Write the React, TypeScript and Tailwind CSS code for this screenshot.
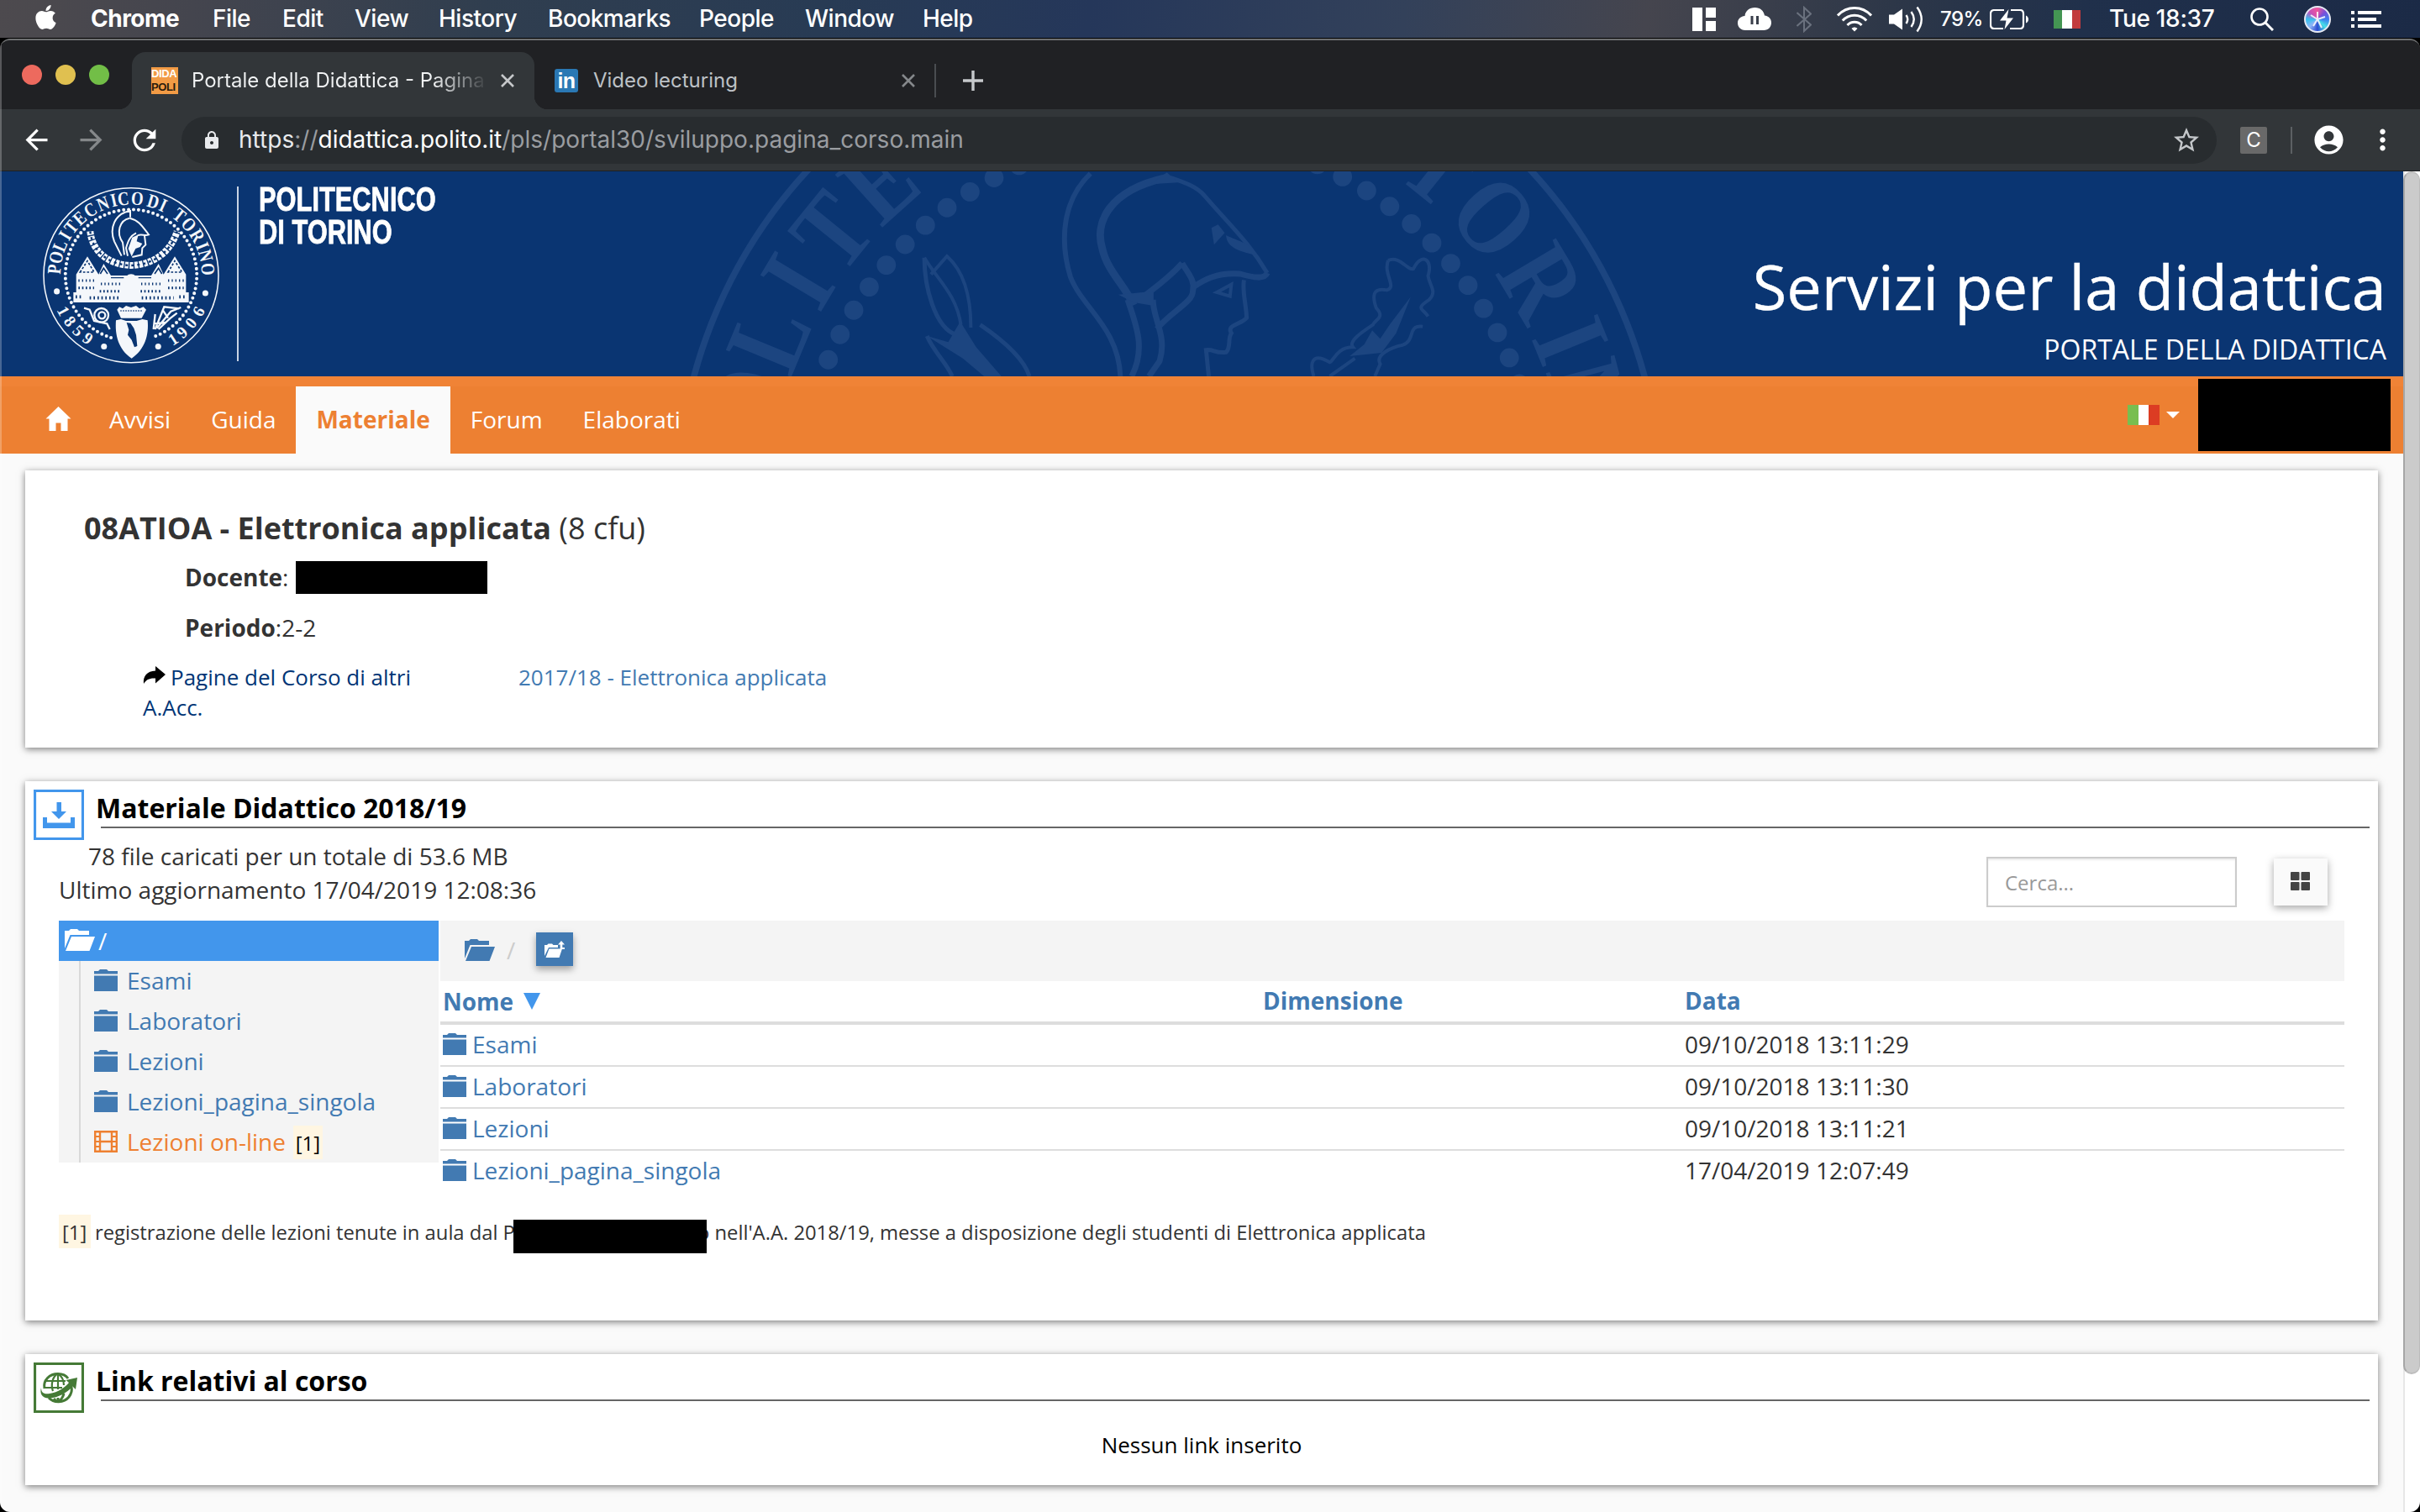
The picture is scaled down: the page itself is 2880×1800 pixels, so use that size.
import React from 'react';
import type { ReactNode } from 'react';
import { FaApple } from 'react-icons/fa';
import {
  MdAccountCircle,
  MdArrowBack,
  MdArrowForward,
  MdLock,
  MdMoreVert,
  MdRefresh,
  MdStarBorder,
} from 'react-icons/md';

const UI = "font-['Inter','Liberation_Sans',sans-serif]";
const WEB = "font-['Open_Sans','Noto_Sans',sans-serif]";

/* ---------- macOS menu bar ---------- */

const MENUS = [
  { label: 'Chrome', cls: 'w-[145px] font-bold' },
  { label: 'File', cls: 'w-[83px] font-medium' },
  { label: 'Edit', cls: 'w-[86px] font-medium' },
  { label: 'View', cls: 'w-[100px] font-medium' },
  { label: 'History', cls: 'w-[130px] font-medium' },
  { label: 'Bookmarks', cls: 'w-[180px] font-medium' },
  { label: 'People', cls: 'w-[126px] font-medium' },
  { label: 'Window', cls: 'w-[140px] font-medium' },
  { label: 'Help', cls: 'w-[90px] font-medium' },
];

function MenuBar() {
  return (
    <div
      className={`${UI} flex h-[45px] shrink-0 items-center bg-[linear-gradient(100deg,#4d4a4e_0%,#44454e_8%,#303e4f_20%,#283b54_34%,#25375a_45%,#33415a_58%,#45454e_68%,#2d3748_78%,#20304b_86%,#1b2a46_100%)] text-[28px] leading-[43px] text-white`}
    >
      <FaApple className="-mt-[4px] ml-[38px] size-[33px]" />
      <div className="ml-[37px] flex tracking-[-0.5px]">
        {MENUS.map((m) => (
          <span key={m.label} className={m.cls}>
            {m.label}
          </span>
        ))}
      </div>
      <div className="ml-auto flex items-center">
        <svg className="size-7" viewBox="0 0 28 28" fill="#fff">
          <path d="M0 0h12v28H0zM16 0h12v12H16zM16 16h12v12H16z" />
        </svg>
        <svg className="ml-[26px] h-[27px] w-10" viewBox="0 0 40 27">
          <path
            d="M9 27C3 27 0 22.500 0 18.500C0 14 3 10.500 8.500 10C9 4 14 0 20.500 0C27 0 31 4 32 9.500C37 10 40 13.500 40 18C40 23 36.500 27 31 27Z"
            fill="#fff"
          />
          <path d="M15.500 10h3v10h-3zM22 10h3v10h-3z" fill="#3a3f4b" />
        </svg>
        <svg className="ml-[30px] h-8 w-[18px]" viewBox="0 0 18 32" fill="none" stroke="#6a717e" strokeWidth="2">
          <path d="M0.500 8L17 22.500L9 30V2L17 9.500L0.500 24" />
        </svg>
        <svg className="ml-[30px] h-[30px] w-[42px]" viewBox="0 0 42 30" fill="none" stroke="#fff" strokeWidth="3">
          <path d="M1 10.500C12 -1.500 30 -1.500 41 10.500M6.800 16.500C14.500 8 27.500 8 35.200 16.500M12.500 22C17 17 25 17 29.500 22" />
          <path d="M17.500 26C19.500 24 22.500 24 24.500 26L21 29.500Z" fill="#fff" stroke="none" />
        </svg>
        <svg className="ml-[20px] h-8 w-[41px]" viewBox="0 0 41 32" fill="none" stroke="#fff" strokeWidth="2.400">
          <path d="M0 10.500H6L16 3.500V28.500L6 21.500H0Z" fill="#fff" stroke="none" />
          <path d="M20.500 11Q24 16 20.500 21M26.500 7Q33 16 26.500 25M33.500 1.500Q44 16 33.500 30.500" />
        </svg>
        <span className="ml-[20px] w-[59px] text-[24px] font-medium tracking-[-0.6px]">79%</span>
        <svg className="h-6 w-[46px]" viewBox="0 0 46 24" fill="none" stroke="#fff" strokeWidth="2.200">
          <path d="M17 1H5.500Q1 1 1 5.500V18.500Q1 23 5.500 23H16M25 1H36Q40 1 40 5.500V18.500Q40 23 36 23H24" />
          <path d="M43 7.500Q46 9 46 12T43 16.500Z" fill="#fff" stroke="none" />
          <path d="M22.500 0L12 13.500H19.500L17.500 24L28 10.500H20.500Z" fill="#fff" stroke="none" />
        </svg>
        <span className="ml-[30px] flex h-[22px] w-8">
          <span className="flex-1 bg-[#449553]" />
          <span className="w-[12px] bg-white" />
          <span className="flex-1 bg-[#c23b3d]" />
        </span>
        <span className="ml-[34px] w-[168px] font-medium tracking-[-0.3px]">Tue 18:37</span>
        <svg className="h-7 w-[28px]" viewBox="0 0 28 28" fill="none" stroke="#fff" strokeWidth="2.600">
          <circle cx="11" cy="11" r="9.500" />
          <path d="M18 18L27 27" strokeWidth="3" />
        </svg>
        <span className="ml-[36px] flex size-8 items-center justify-center rounded-full border-2 border-[#e5e9f3] bg-[conic-gradient(from_0deg,#f0569c,#7b4fd8,#3b7df0,#47e0e8,#2c4bd0,#8fb6f8,#35c0ee,#c94fb8,#f0569c)]">
          <svg className="size-6" viewBox="0 0 24 24" stroke="#fff" strokeWidth="2">
            <path d="M12 12L4 7M12 12L21 9M12 12L17 22M12 12L7 20M12 12V3" opacity=".85" />
          </svg>
        </span>
        <svg className="mr-[46px] ml-[24px] h-5 w-9" viewBox="0 0 36 20" fill="#fff">
          <path d="M0 0h4v4H0zM8 0h28v4H8zM0 8h4v4H0zM8 8h22v4H8zM0 16h4v4H0zM8 16h28v4H8z" />
        </svg>
      </div>
    </div>
  );
}

/* ---------- Chrome window ---------- */

function TabClose({ color }: { color: string }) {
  return (
    <svg className="size-4" viewBox="0 0 16 16" stroke={color} strokeWidth="2.600">
      <path d="M1 1L15 15M15 1L1 15" />
    </svg>
  );
}

function TabStrip() {
  return (
    <div className={`${UI} flex h-[82px] shrink-0 items-end bg-[#202124] text-[24px] leading-[68px]`}>
      <div className="mb-[29px] ml-[26px] flex gap-4">
        <span className="size-6 rounded-full bg-[#ed6a5e]" />
        <span className="size-6 rounded-full bg-[#e0c050]" />
        <span className="size-6 rounded-full bg-[#72be47]" />
      </div>
      <div className="relative ml-[27px] flex h-[68px] w-[479px] items-center rounded-t-[16px] bg-[#323639]">
        <span className="absolute bottom-0 -left-4 size-4 bg-[radial-gradient(circle_at_0_0,transparent_16px,#323639_16.5px)]" />
        <span className="absolute -right-4 bottom-0 size-4 bg-[radial-gradient(circle_at_100%_0,transparent_16px,#323639_16.5px)]" />
        <span className="ml-[23px] flex size-8 flex-col justify-center overflow-hidden bg-[#f29b45] font-['Liberation_Sans',sans-serif] text-[13px] leading-[16px] font-bold tracking-[-0.4px]">
          <span className="text-white">DIDA</span>
          <span className="text-[#2a1c0c]">POLI</span>
        </span>
        <span className="ml-[16px] w-[350px] overflow-hidden bg-[linear-gradient(90deg,#f1f3f4_82%,#323639_101%)] bg-clip-text whitespace-nowrap text-transparent">
          Portale della Didattica - Pagina
        </span>
        <span className="ml-[18px]">
          <TabClose color="#c6c8ca" />
        </span>
      </div>
      <div className="flex h-[68px] w-[478px] items-center">
        <span className="ml-[24px] flex size-7 items-center justify-center rounded-[3px] bg-[#2a78b4] font-['Liberation_Sans',sans-serif] text-[25px] leading-[28px] font-bold tracking-[-0.5px] text-white">
          in
        </span>
        <span className="ml-[18px] text-[#bdc1c6]">Video lecturing</span>
        <span className="mr-[23px] ml-auto">
          <TabClose color="#85888b" />
        </span>
        <span className="h-10 w-[2px] bg-[#4a4d51]" />
      </div>
      <svg className="mb-[22px] ml-[32px] size-6" viewBox="0 0 24 24" stroke="#c6c9cc" strokeWidth="3.400">
        <path d="M12 0V24M0 12H24" />
      </svg>
    </div>
  );
}

function Toolbar() {
  return (
    <div className={`${UI} flex h-[74px] shrink-0 items-center border-b border-[#1f2022] bg-[#323639] text-white`}>
      <MdArrowBack className="ml-[24px] size-[39px]" />
      <MdArrowForward className="ml-[26px] size-[39px] text-[#85888a]" />
      <MdRefresh className="ml-[24px] size-[40px]" />
      <div className="ml-[24px] flex h-14 w-[2422px] items-center rounded-full bg-[#282c2f]">
        <MdLock className="ml-[24px] size-[24px] text-[#e8eaed]" />
        <span className="mb-[2px] ml-[20px] text-[28px] leading-[54px] tracking-[0.015px] whitespace-nowrap text-[#9a9da1]">
          <span className="text-[#e8eaed]">https</span>://
          <span className="text-white">didattica.polito.it</span>
          /pls/portal30/sviluppo.pagina_corso.main
        </span>
        <MdStarBorder className="mr-[18px] ml-auto size-[36px] text-[#c4c7ca]" />
      </div>
      <span className="ml-[28px] flex size-8 items-center justify-center rounded-[2px] bg-[#696969] text-[24px] leading-8">
        C
      </span>
      <span className="ml-[28px] h-8 w-[2px] bg-[#5c6063]" />
      <MdAccountCircle className="ml-[23px] size-[41px]" />
      <MdMoreVert className="ml-[24px] size-[39px]" />
    </div>
  );
}

/* ---------- Page header ---------- */

type Glyph = [char: string, angle: number];

/* Upper lettering: degrees clockwise from the top of the seal. */
const SEAL_NAME: Glyph[] = [
  ['P', -85.4], ['O', -76.6], ['L', -67.4], ['I', -59], ['T', -51], ['E', -42], ['C', -32],
  ['N', -21.5], ['I', -13], ['C', -5.8], ['O', 4.6], ['D', 16.8], ['I', 24.6], ['T', 38.8],
  ['O', 48.6], ['R', 59.2], ['I', 67.8], ['N', 75.2], ['O', 85.4],
];

const MARK_NAME = SEAL_NAME.filter(([, a]) => Math.abs(a) > 36 && Math.abs(a) < 78);

/* Dates: degrees clockwise from the bottom of the seal. */
const SEAL_YEARS: Glyph[] = [
  ['1', 62.2], ['8', 53], ['5', 43.7], ['9', 34.4], ['1', -33.3], ['9', -41.8], ['0', -51.4], ['6', -61.8],
];

/* Border, beads and lettering, centred on the origin with an outer radius of 100. */
function SealRing({ color, ring, name, years }: { color: string; ring: number; name: Glyph[]; years: Glyph[] }) {
  return (
    <g fill={color}>
      <circle r="100" fill="none" stroke={color} strokeWidth={ring} />
      <path
        d="M-23 71.500A75.200 75.200 0 1 1 23 71.500"
        fill="none"
        stroke={color}
        strokeWidth="3.900"
        strokeLinecap="round"
        strokeDasharray="0 5.670"
      />
      <g fontFamily="'Liberation Serif', serif" fontWeight="bold" textAnchor="middle">
        {name.map(([c, a]) => (
          <text key={a} fontSize="22" transform={`rotate(${a}) translate(0 -80.800) scale(0.820 1)`}>
            {c}
          </text>
        ))}
        {years.map(([c, a]) => (
          <text key={a} fontSize="19" transform={`rotate(${a}) translate(0 94)`}>
            {c}
          </text>
        ))}
      </g>
      <circle cx="-85" cy="18.500" r="3.400" />
      <circle cx="85" cy="20.500" r="3.400" />
      <circle cx="-31" cy="81.500" r="3.400" />
      <circle cx="31" cy="81.500" r="3.400" />
    </g>
  );
}

function Seal() {
  return (
    <svg className="h-[230px] w-[240px]" viewBox="0 0 720 690">
      <g transform="translate(348 347) scale(3.120)">
        <SealRing color="#f4f7fb" ring={1.5} name={SEAL_NAME} years={SEAL_YEARS} />
      </g>
      <g fill="none" stroke="#f4f7fb" strokeWidth="6">
        <path d="M345 114V140M345 118C288 126 270 180 288 226C300 250 306 262 314 278" />
        <path d="M343 143C306 150 294 196 318 230L324 274" />
        <path d="M343 143C375 150 388 172 411 202C398 208 384 198 372 205" />
        <path d="M366 196C346 206 338 222 330 250L336 278" />
        <path d="M396 206L400 238L388 250L386 274L352 282" />
      </g>
      <path d="M352 212L374 202L368 226L388 234L380 246L364 252L350 280L338 252Z" fill="#f4f7fb" />
      <path
        d="M202 190C210 268 274 310 348 312C424 310 490 266 512 190"
        fill="none"
        stroke="#f4f7fb"
        strokeWidth="24"
        strokeDasharray="13 4"
      />
      <path
        d="M202 190C210 268 274 310 348 312C424 310 490 266 512 190"
        fill="none"
        stroke="#0a3572"
        strokeWidth="7"
        strokeDasharray="9 12"
      />
      <g fill="#f4f7fb">
        <path d="M142 408H152V344L192 280L232 344L250 306L276 348H420L446 306L464 344L504 280L544 344V408H554V444H142Z" />
        <circle cx="348" cy="366" r="23" />
      </g>
      <g fill="none" stroke="#0a3572">
        <path d="M276 356H322M374 356H420" strokeWidth="4" />
        <path d="M166 336L192 296L216 336ZM480 336L504 296L530 336Z" strokeWidth="5" strokeDasharray="8 6" />
        <path d="M238 342L250 322L264 342M432 342L446 322L458 342" strokeWidth="5" />
        <path d="M160 366H216M240 378H312M384 378H456M480 366H536" strokeWidth="9" strokeDasharray="4 9" />
        <path d="M160 392H216M236 404H314M382 404H460M480 392H536" strokeWidth="9" strokeDasharray="5 8" />
        <path d="M150 424H176M200 428H312M386 428H500M520 424H546" strokeWidth="11" strokeDasharray="5 9" />
      </g>
      <g fill="none" stroke="#f4f7fb" strokeWidth="7">
        <circle cx="242" cy="490" r="25" />
        <circle cx="244" cy="490" r="12" />
        <path d="M180 464L200 470L216 510L262 520L272 540" />
        <path d="M428 540L434 486M434 540L466 460L520 466M440 536L490 476L526 462M446 540L486 502L512 482M460 470L480 500M428 520L470 516" />
      </g>
      <path
        d="M298 470L306 460L318 466L330 456L348 462L366 456L378 466L392 460L402 470L386 500H312Z"
        fill="#f4f7fb"
      />
      <path d="M310 474H388" stroke="#0a3572" strokeWidth="5" strokeDasharray="4 5" />
      <path d="M294 508L312 504L330 510H368L388 504L407 508C412 560 398 612 350 644C302 612 290 560 294 508Z" fill="#f4f7fb" />
      <path d="M332 516L346 518L358 536L366 560L370 600L360 604L350 578L336 560L340 542Z" fill="#0a3572" />
    </svg>
  );
}

/* Helmeted head and laurel branches: outline path and stroke width in pixels. */
const MARK_LINES: [d: string, width: number][] = [
  ['M680 20C640 110 632 250 650 390C668 500 722 570 725 744', 6],
  ['M795 34C705 80 686 200 698 290C706 370 732 420 745 490', 9],
  ['M800 34C820 50 840 66 852 100C892 210 920 270 946 375', 5],
  ['M946 375C942 398 926 392 905 378C870 372 850 400 835 425', 7],
  ['M818 340C795 400 775 430 752 474', 7],
  ['M818 340C826 375 838 400 834 440C834 480 800 515 780 575', 7],
  ['M736 470C748 560 764 640 742 744', 7],
  ['M774 470C774 540 796 600 784 690L768 744', 7],
  ['M911 400C908 440 914 480 915 535C906 560 884 560 892 590C886 610 892 640 884 658C866 662 866 646 854 650L858 744', 5],
  ['M870 444L892 416L890 458Z', 4],
  ['M430 320C430 420 445 570 478 596', 5],
  ['M430 320C450 400 478 450 485 560', 4],
  ['M440 380L464 315C490 370 500 460 500 570', 4],
  ['M434 600C445 660 462 690 472 744', 5],
  ['M514 560C545 610 580 680 588 744', 5],
  ['M1128 330C1145 310 1158 370 1166 360C1178 300 1196 325 1188 385C1190 420 1202 440 1190 470C1168 505 1180 500 1188 530', 4],
  ['M1128 330C1120 380 1142 425 1126 436C1104 425 1104 460 1110 500C1124 535 1108 540 1105 560C1086 590 1068 620 1075 640C1050 640 1046 690 1040 694C1012 655 1010 700 1016 744', 4],
  ['M1180 566C1156 560 1170 615 1150 632C1132 640 1108 668 1116 700L1108 744M1040 744L1078 680', 4],
];

/* Enlarged seal printed faintly behind the header. */
function Watermark() {
  return (
    <svg
      className="absolute top-0 left-[760px] h-[244px] w-[1240px]"
      viewBox="0 12 1568 732"
      preserveAspectRatio="none"
    >
      <g transform="translate(798.500 1200) scale(7.405 17.568)">
        <SealRing color="#1c4580" ring={1.3} name={MARK_NAME} years={[]} />
      </g>
      <g fill="none" stroke="#1c4580">
        {MARK_LINES.map(([d, w]) => (
          <path key={d} d={d} strokeWidth={w} vectorEffect="non-scaling-stroke" />
        ))}
      </g>
      <g fill="#1c4580">
        <path d="M862 214L872 202L882 232L866 274Z" />
        <path d="M884 240C900 260 925 270 930 312C910 300 885 290 884 240Z" />
        <path d="M795 16L812 52L770 58Z" />
        <path d="M434 600L466 622L484 548L508 640L546 744H520L488 680Z" />
        <path d="M1162 460L1140 590L1118 660L1070 672L1092 630L1104 580L1116 610L1130 560Z" />
        <path d="M722 452L775 440V492L745 480Z" />
      </g>
    </svg>
  );
}

function PageHeader() {
  return (
    <header className="relative flex h-[244px] shrink-0 overflow-hidden bg-[#0a3572]">
      <Watermark />
      <div className="mt-[8px] ml-[40px]">
        <Seal />
      </div>
      <span className="mt-[18px] ml-[2px] h-[208px] w-[2px] bg-[#c8d3e3]" />
      <div className="mt-[14px] ml-[24px] h-[80px] w-[230px] origin-left scale-x-[0.752] font-['Liberation_Sans',sans-serif] text-[41px] leading-[38.500px] font-bold whitespace-nowrap text-white [-webkit-text-stroke:0.8px_white]">
        POLITECNICO
        <br />
        DI TORINO
      </div>
      <div className="relative mt-[87px] mr-[20px] ml-auto flex flex-col items-end text-white">
        <h1 className="text-[74px] leading-[100px] [-webkit-text-stroke:0.4px_white]">Servizi per la didattica</h1>
        <p className="mt-[3px] text-[32px] leading-[44px]">PORTALE DELLA DIDATTICA</p>
      </div>
    </header>
  );
}

const NAV_LINK = 'h-[80px] px-6';

function NavBar() {
  return (
    <nav className="flex h-[92px] shrink-0 items-center bg-[linear-gradient(#f08336_12px,#ed8032_12px)] text-[28px] leading-[78px] text-white">
      <div className="flex h-[80px] items-center self-end">
        <svg className="mr-[21px] mb-[4px] ml-[54px] h-[29px] w-[31px]" viewBox="0 0 30 29" fill="#fff">
          <path d="M15 0L30 14.500H26V29H18V19.500H12V29H4V14.500H0Z" />
        </svg>
        <a className={NAV_LINK}>Avvisi</a>
        <a className={NAV_LINK}>Guida</a>
        <a className="h-[80px] bg-[#fafafa] px-6 font-bold text-[#ed8032]">Materiale</a>
        <a className={NAV_LINK}>Forum</a>
        <a className={NAV_LINK}>Elaborati</a>
      </div>
      <span className="ml-auto flex h-6 w-[38px]">
        <span className="flex-1 bg-[#78be50]" />
        <span className="flex-1 bg-white" />
        <span className="flex-1 bg-[#dc3c23]" />
      </span>
      <svg className="ml-[8px] h-2 w-4" viewBox="0 0 16 8" fill="#fff">
        <path d="M0 0H16L8 8Z" />
      </svg>
      <span className="mr-[15px] ml-[22px] h-[86px] w-[229px] bg-black" />
    </nav>
  );
}

/* ---------- Content ---------- */

const CARD = 'mx-[30px] shrink-0 bg-white shadow-[0_2px_8px_rgba(0,0,0,0.5)]';

function Folder() {
  return (
    <svg className="h-[26px] w-7 shrink-0" viewBox="0 0 28 26" fill="currentColor">
      <path d="M0 2H5L7 0H15L17 2H28V5.500H0ZM0 7.500H28V26H0Z" />
    </svg>
  );
}

function OpenFolder() {
  return (
    <svg className="mb-[2px] h-[26px] w-9 shrink-0" viewBox="0 0 36 26" fill="currentColor">
      <path d="M0 2H5L7 0H15L17 2H29V7H6.500L0 23ZM8 9H36L29.500 26H1Z" />
    </svg>
  );
}

function CardTitle({ icon, children }: { icon: ReactNode; children: ReactNode }) {
  return (
    <div className="flex h-[69px] pt-[10px] pr-[10px] pl-[10px]">
      {icon}
      <div className="ml-[14px] flex-1">
        <h2 className="h-[44px] text-[32px] leading-[44px] font-bold text-black">{children}</h2>
        <div className="ml-[6px] h-[2px] bg-[#666666]" />
      </div>
    </div>
  );
}

function CourseCard() {
  return (
    <section className={`${CARD} mt-[20px] h-[330px] pt-[44px] text-[28px] text-[#333333]`}>
      <h2 className="ml-[70px] text-[36px] leading-[50px]">
        <b>08ATIOA - Elettronica applicata</b> (8 cfu)
      </h2>
      <div className="mt-[8px] ml-[190px] flex items-center leading-[50px]">
        <b>Docente</b>:<span className="mt-[1px] ml-[9px] h-[39px] w-[228px] bg-black" />
      </div>
      <div className="mt-[10px] ml-[190px] leading-[50px]">
        <b>Periodo</b>:2-2
      </div>
      <div className="mt-[16px] ml-[140px] flex text-[26px] leading-[36px]">
        <div className="w-[447px] text-[#003576]">
          <span className="flex">
            <svg className="mt-[5px] mr-[6px] h-[21px] w-[27px]" viewBox="0 0 27 21" fill="#000">
              <path d="M15 0L27 10L15 20.500V14.500C8 14 4 16 1 21C0 12 5 6 15 5.500Z" />
            </svg>
            Pagine del Corso di altri
          </span>
          A.Acc.
        </div>
        <a className="text-[#427ab2]">2017/18 - Elettronica applicata</a>
      </div>
    </section>
  );
}

const TREE = ['Esami', 'Laboratori', 'Lezioni', 'Lezioni_pagina_singola'];

const FILES = [
  { name: 'Esami', date: '09/10/2018 13:11:29' },
  { name: 'Laboratori', date: '09/10/2018 13:11:30' },
  { name: 'Lezioni', date: '09/10/2018 13:11:21' },
  { name: 'Lezioni_pagina_singola', date: '17/04/2019 12:07:49' },
];

function FolderTree() {
  return (
    <div className="flex h-[288px] w-[452px] flex-col bg-[#f4f4f4] leading-[46px]">
      <div className="flex h-12 shrink-0 items-center bg-[#4296ec] pl-[7px] text-white">
        <OpenFolder />
        <span className="ml-[4px]">/</span>
      </div>
      <div className="ml-[24px] flex-1 border-l-2 border-[#d9d9d9] pl-[16px] text-[#427ab2]">
        {TREE.map((t) => (
          <div key={t} className="flex h-12 items-center gap-[11px] pb-[2px]">
            <Folder />
            <span>{t}</span>
          </div>
        ))}
        <div className="flex h-12 items-center gap-[11px] pb-[2px] text-[#ee8031]">
          <svg className="h-[26px] w-7" viewBox="0 0 28 26" fill="none" stroke="currentColor" strokeWidth="2.400">
            <path d="M1.200 1.200H26.800V24.800H1.200ZM7 1V25M21 1V25M7 13H21" />
            <path d="M1 7H7M1 13H7M1 19H7M21 7H27M21 13H27M21 19H27" strokeWidth="1.800" />
          </svg>
          <span>Lezioni on-line</span>
          <span className="mt-[2px] -ml-[2px] h-10 w-[35px] bg-[#fff6e2] text-center text-[24px] leading-[42px] text-black">
            [1]
          </span>
        </div>
      </div>
    </div>
  );
}

function FileList() {
  return (
    <div className="ml-[2px] w-[2266px]">
      <div className="flex h-[72px] items-center bg-[#f4f4f4] pl-[29px] text-[#427ab2]">
        <OpenFolder />
        <span className="-mt-[3px] ml-[14px] w-[35px] text-[#cccccc]">/</span>
        <span className="-mt-[4px] flex h-10 w-11 items-center justify-center bg-[#427ab2] shadow-[0_4px_8px_rgba(0,0,0,0.35)]">
          <svg className="h-5 w-6" viewBox="0 0 24 20" fill="#fff">
            <path d="M0 5H3L4.500 3.500H9L10.500 5H16V8H5L0 18ZM5.500 9.500H21L17.500 20H1.500Z" />
            <path d="M20 0L24 4.500H21.300V8H24V10H18.700V4.500H16Z" />
          </svg>
        </span>
      </div>
      <div className="flex h-[52px] border-b-4 border-[#dddddd] pl-[3px] leading-[46px] font-bold text-[#427ab2]">
        <span className="flex w-[976px] items-center">
          Nome
          <svg className="ml-[12px] h-5 w-[20px]" viewBox="0 0 20 20" fill="#4296ec">
            <path d="M0 0H20L10 20Z" />
          </svg>
        </span>
        <span className="w-[502px]">Dimensione</span>
        <span>Data</span>
      </div>
      {FILES.map((f, i) => (
        <div
          key={f.name}
          className={
            i < FILES.length - 1
              ? 'flex h-[50px] border-b-2 border-[#dddddd] pl-[3px] leading-[46px]'
              : 'flex h-[50px] pl-[3px] leading-[46px]'
          }
        >
          <span className="flex h-[46px] w-[1478px] items-center gap-[7px] text-[#427ab2]">
            <Folder />
            {f.name}
          </span>
          <span>{f.date}</span>
        </div>
      ))}
    </div>
  );
}

function MaterialsCard() {
  return (
    <section className={`${CARD} mt-[40px] h-[642px] text-[28px] text-[#333333]`}>
      <CardTitle
        icon={
          <svg className="size-[60px]" viewBox="0 0 60 60" fill="#4296ec">
            <path d="M1.500 1.500H58.500V58.500H1.500Z" fill="none" stroke="#4296ec" strokeWidth="3.200" />
            <path d="M27.500 15H33V26H39L30 35L21 26H27.500ZM11 33H16V39.500H44V33H49V46H11Z" />
          </svg>
        }
      >
        Materiale Didattico 2018/19
      </CardTitle>
      <div className="flex h-[97px] pr-[60px] pl-[40px]">
        <div className="leading-[40px]">
          <p className="ml-[35px]">78 file caricati per un totale di 53.6 MB</p>
          <p>Ultimo aggiornamento 17/04/2019 12:08:36</p>
        </div>
        <div className="mt-[21px] ml-auto h-[60px] w-[298px] border-2 border-[#cccccc] pl-[20px] text-[24px] leading-[58px] text-[#999999] shadow-[inset_0_2px_2px_rgba(0,0,0,0.075)]">
          Cerca...
        </div>
        <div className="mt-[23px] ml-[44px] flex h-14 w-16 items-center justify-center bg-[#fafafa] shadow-[0_3px_9px_rgba(0,0,0,0.35)]">
          <svg className="mr-[2px] mb-[2px] h-[22px] w-[23px]" viewBox="0 0 23 22" fill="#444">
            <rect width="10.500" height="10" rx="1" />
            <rect x="12.500" width="10.500" height="10" rx="1" />
            <rect y="12" width="10.500" height="10" rx="1" />
            <rect x="12.500" y="12" width="10.500" height="10" rx="1" />
          </svg>
        </div>
      </div>
      <div className="ml-[40px] flex h-[324px]">
        <FolderTree />
        <FileList />
      </div>
      <div className="mt-[26px] ml-[40px] flex h-10 text-[23.800px] leading-[43px] whitespace-pre">
        <span className="w-[38px] bg-[#fff6e2] pl-[4px]">[1]</span>
        <span className="ml-[5px] tracking-[-0.02px]">registrazione delle lezioni tenute in aula dal P</span>
        <span className="relative z-10 mt-[6px] -ml-[2px] h-10 w-[230px] bg-black" />
        <span className="-ml-[11px]">o nell'A.A. 2018/19, messe a disposizione degli studenti di Elettronica applicata</span>
      </div>
    </section>
  );
}

function LinksCard() {
  return (
    <section className={`${CARD} mt-[40px] h-[156px] text-[26px] text-black`}>
      <CardTitle
        icon={
          <svg className="size-[60px]" viewBox="0 0 60 60" fill="#457a36">
            <path d="M1.500 1.500H58.500V58.500H1.500Z" fill="none" stroke="#457a36" strokeWidth="3.200" />
            <g fill="none" stroke="#457a36" strokeWidth="3">
              <path d="M13 31C11 21 19 13.500 29 13.500C35 13.500 39 16 41 19" />
              <path d="M29 13V32M23 34C20 26 23 17 28 13.500M36 27C36 21 33 16 29 13.500M15 22H38M13 30H34" strokeWidth="2.200" />
              <path d="M18 42C24 48.500 36 48.500 42 41C45 37 46 33 45 29M29 42V47M36 37C35 42 32 45 29 47M24 43L28 47" strokeWidth="3" />
            </g>
            <path d="M9 30C9 36 12 38 19 37C29 36 38 29 42 24L38.500 21L52 18L50 32L46.500 28.500C40 36 29 42 19 42.500C10 43 7 37 9 30Z" />
          </svg>
        }
      >
        Link relativi al corso
      </CardTitle>
      <p className="mt-[19px] text-center leading-[40px]">Nessun link inserito</p>
    </section>
  );
}

export default function App() {
  return (
    <div className="flex h-[1800px] w-[2880px] flex-col overflow-hidden bg-black">
      <MenuBar />
      <div className="relative mt-px flex flex-1 flex-col overflow-hidden rounded-[12px] border-t-2 border-[#6e7071] bg-[#202124]">
        <TabStrip />
        <Toolbar />
        <div className="flex min-h-0 flex-1">
          <main className={`${WEB} flex w-[2860px] flex-col bg-[#fafafa]`}>
            <PageHeader />
            <NavBar />
            <CourseCard />
            <MaterialsCard />
            <LinksCard />
          </main>
          <div className="w-5 border-l-2 border-[#e7e7e7] bg-white">
            <div className="-ml-[2px] h-[1432px] w-5 rounded-full border-2 border-r-[1px] border-[#bcbcbc] border-l-[#a6a6a6] bg-[#cbcbcb]" />
          </div>
        </div>
        <span className="absolute inset-y-0 left-0 w-[2px] bg-white/25" />
      </div>
    </div>
  );
}
